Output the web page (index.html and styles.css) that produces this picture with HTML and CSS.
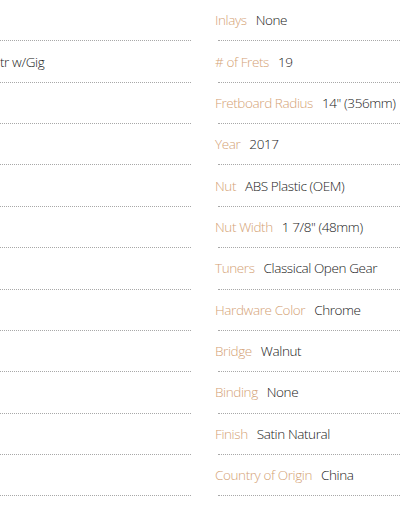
FILE: index.html
```html
<!DOCTYPE html>
<html>
<head>
<meta charset="utf-8">
<link rel="stylesheet" href="styles.css">
</head>
<body>
<div class="specs">
  <div class="col col-left">
    <div class="row"></div>
    <div class="row"><span class="value">tr w/Gig</span></div>
    <div class="row"></div>
    <div class="row"></div>
    <div class="row"></div>
    <div class="row"></div>
    <div class="row"></div>
    <div class="row"></div>
    <div class="row"></div>
    <div class="row"></div>
    <div class="row"></div>
    <div class="row"></div>
  </div>
  <div class="col col-right">
    <div class="row"><span class="label">Inlays</span><span class="value">None</span></div>
    <div class="row"><span class="label"># of Frets</span><span class="value">19</span></div>
    <div class="row"><span class="label">Fretboard Radius</span><span class="value">14" (356mm)</span></div>
    <div class="row"><span class="label">Year</span><span class="value">2017</span></div>
    <div class="row"><span class="label">Nut</span><span class="value">ABS Plastic (OEM)</span></div>
    <div class="row"><span class="label">Nut Width</span><span class="value">1 7/8" (48mm)</span></div>
    <div class="row"><span class="label">Tuners</span><span class="value">Classical Open Gear</span></div>
    <div class="row"><span class="label">Hardware Color</span><span class="value">Chrome</span></div>
    <div class="row"><span class="label">Bridge</span><span class="value">Walnut</span></div>
    <div class="row"><span class="label">Binding</span><span class="value">None</span></div>
    <div class="row"><span class="label">Finish</span><span class="value">Satin Natural</span></div>
    <div class="row"><span class="label">Country of Origin</span><span class="value">China</span></div>
  </div>
</div>
</body>
</html>
```
FILE: styles.css
```css
html, body {
  margin: 0;
  padding: 0;
  background: #ffffff;
}

body {
  font-family: "Open Sans", "Noto Sans", sans-serif;
  font-size: 13.5px;
  font-weight: 300;
  letter-spacing: -0.4px;
  color: #333333;
  overflow: hidden;
}

.specs {
  display: grid;
  grid-template-columns: 191px 182px;
  column-gap: 27px;
  width: 400px;
}

.col {
  display: flex;
  flex-direction: column;
}

.row {
  box-sizing: border-box;
  height: 41.36px;
  display: flex;
  align-items: center;
  gap: 9px;
  border-bottom: 1px dotted #a8a8a8;
  white-space: nowrap;
}

.col-right .row {
  margin-right: -20px;
}

.col-right .label {
  margin-left: -3px;
}

.label {
  color: #d4a275;
}

.value {
  color: #1a1a1a;
}
```
